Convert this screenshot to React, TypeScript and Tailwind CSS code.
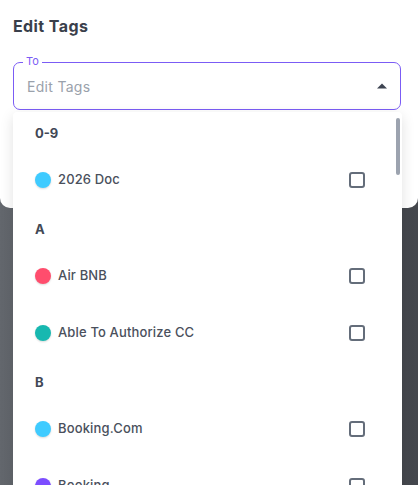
import React from "react";

type Item = { kind: "h"; label: string } | { kind: "r"; label: string; color: string };

const items: Item[] = [
  { kind: "h", label: "0-9" },
  { kind: "r", label: "2026 Doc", color: "#3fcbff" },
  { kind: "h", label: "A" },
  { kind: "r", label: "Air BNB", color: "#ff4d6d" },
  { kind: "r", label: "Able To Authorize CC", color: "#17b8b0" },
  { kind: "h", label: "B" },
  { kind: "r", label: "Booking.Com", color: "#3fcbff" },
  { kind: "r", label: "Booking", color: "#7c4dff" },
];

export default function App() {
  return (
    <div
      className="relative w-[418px] h-[485px] overflow-hidden bg-gradient-to-r from-[#63676d] to-[#44474d]"
      style={{ fontFamily: "Inter, 'Open Sans', sans-serif" }}
    >
      <div className="h-[208px] bg-white rounded-b-[10px] pl-[13px] pr-[17px] pt-[16px]">
        <h1 className="text-[16px] font-bold text-[#3a3f4b] leading-[20px] tracking-[0.4px]">Edit Tags</h1>
        <div className="relative mt-[26px] h-[48px] rounded-[7px] border border-[#7b5cf5] flex items-center pl-[13px] pr-[13px]">
          <span className="absolute -top-[9px] left-[9px] bg-white px-[3px] text-[11px] leading-[14px] text-[#7b5cf5]">
            To
          </span>
          <span className="flex-1 text-[14px] text-[#9aa1ab] tracking-[0.3px]">Edit Tags</span>
          <svg width="10" height="6" viewBox="0 0 10 6" className="-mt-[1px]">
            <path d="M0 5.5 L5 0.5 L10 5.5 Z" fill="#3d4451" />
          </svg>
        </div>
      </div>
      <div className="absolute left-[13px] top-[112px] w-[389px] h-[400px] bg-white rounded-t-[4px] shadow-[0_4px_14px_rgba(0,0,0,0.12)]">
        <div className="absolute right-[2px] top-[6px] w-[4px] h-[57px] rounded-full bg-[#9ca3af]" />
        {items.map((it, i) =>
          it.kind === "h" ? (
            <div
              key={i}
              className="h-[39px] flex items-center pt-[4px] pl-[22px] text-[13px] font-bold text-[#424855]"
            >
              {it.label}
            </div>
          ) : (
            <div key={i} className="h-[57px] flex items-center pl-[22px] pr-[37px]">
              <span
                className="w-[16px] h-[16px] rounded-full shadow-[0_1px_2px_rgba(0,0,0,0.15)]"
                style={{ backgroundColor: it.color }}
              />
              <span className="ml-[7px] flex-1 text-[13px] font-medium text-[#4a505c] tracking-[0.15px]">
                {it.label}
              </span>
              <span className="w-[16px] h-[16px] rounded-[3px] border-2 border-[#646d7a]" />
            </div>
          )
        )}
      </div>
    </div>
  );
}
